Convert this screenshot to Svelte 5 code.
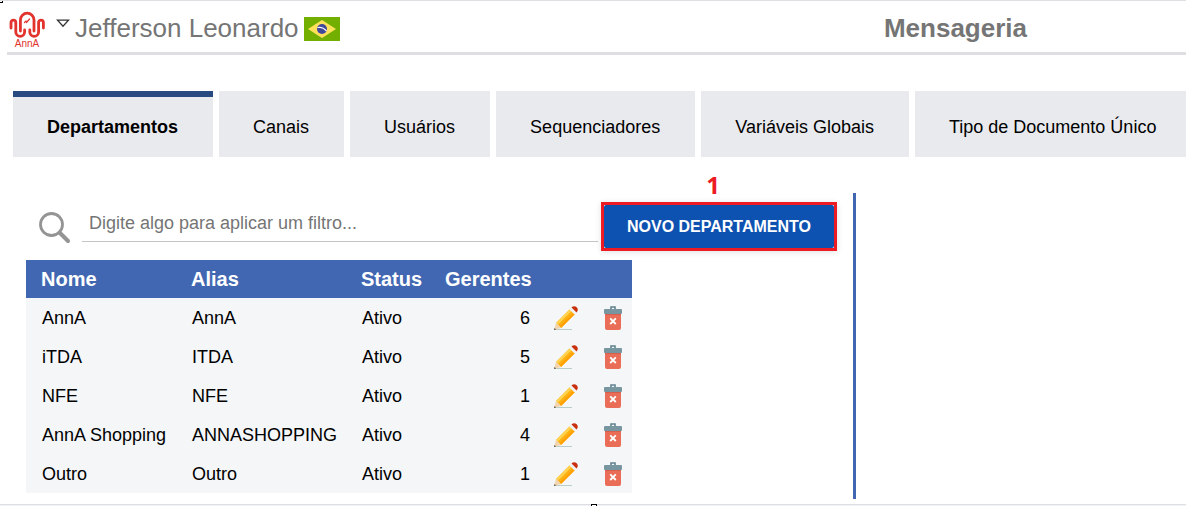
<script>
  const tabs = ['Departamentos', 'Canais', 'Usuários', 'Sequenciadores', 'Variáveis Globais', 'Tipo de Documento Único'];
  let active = $state('Departamentos');
  let filter = $state('');

  const departments = [
    { name: 'AnnA', alias: 'AnnA', status: 'Ativo', managers: 6 },
    { name: 'iTDA', alias: 'ITDA', status: 'Ativo', managers: 5 },
    { name: 'NFE', alias: 'NFE', status: 'Ativo', managers: 1 },
    { name: 'AnnA Shopping', alias: 'ANNASHOPPING', status: 'Ativo', managers: 4 },
    { name: 'Outro', alias: 'Outro', status: 'Ativo', managers: 1 }
  ];
  const rows = $derived(departments.filter((d) => d.name.toLowerCase().includes(filter.toLowerCase())));
</script>

<div class="page">
  <i class="handle corner"></i>
  <header>
    <div class="user">
      <div class="logo">
        <svg width="36" height="28" viewBox="0 0 36 28" fill="none" stroke="#e2342d" stroke-width="2.8" stroke-linecap="round" aria-hidden="true">
          <path d="M2 17V11.500A2.400 2.400 0 0 1 6.800 11.500V21A4.400 4.400 0 0 0 15.600 21V19" />
          <path d="M11.400 20V9A6.800 6.800 0 0 1 25 9V20" />
          <path d="M20.800 19V21A4.400 4.400 0 0 0 29.600 21V11.500A2.400 2.400 0 0 1 34.400 11.500V17" />
          <path d="M15.500 11.500L17 10M17.500 11.500L20.500 8" stroke-width="1.200" />
        </svg>
        <span>AnnA</span>
      </div>
      <button class="menu" aria-label="Menu">
        <svg width="14" height="9" viewBox="0 0 14 9"><path d="M1.500 1.200H12.500L7 7.300Z" fill="#fff" stroke="#333" stroke-width="1.300" /></svg>
      </button>
      <span class="username">Jefferson Leonardo</span>
      <svg class="flag" width="36" height="24" viewBox="0 0 36 24" aria-hidden="true">
        <path fill="#73af00" d="M0 0H36V24H0Z" />
        <path fill="#ffe15a" d="M18 3L32 12L18 21L4 12Z" />
        <circle cx="18" cy="12" r="5" fill="#41479b" />
        <path d="M13.500 10.500C16 10 20 11 22.500 14" fill="none" stroke="#f5f5f5" stroke-width="1.200" />
      </svg>
    </div>
    <h1>Mensageria</h1>
  </header>

  <nav>
    {#each tabs as tab}
      <button class:active={tab === active} onclick={() => (active = tab)}>{tab}</button>
    {/each}
  </nav>

  <main>
    <section>
      <div class="tools">
        <label for="filter" aria-label="Filtro">
          <svg width="32" height="32" viewBox="0 0 32 32" fill="none" stroke="#949494"><circle cx="12.500" cy="12.500" r="11" stroke-width="2.800" /><path d="M20.500 20.500L29 29" stroke-width="4" stroke-linecap="round" /></svg>
        </label>
        <input id="filter" bind:value={filter} placeholder="Digite algo para aplicar um filtro..." />
        <div class="marked">
          <b class="step">1</b>
          <button>NOVO DEPARTAMENTO</button>
        </div>
      </div>

      <table>
        <colgroup><col class="c-name" /><col class="c-alias" /><col class="c-status" /><col class="c-managers" /><col class="c-edit" /><col class="c-remove" /></colgroup>
        <thead>
          <tr><th>Nome</th><th>Alias</th><th>Status</th><th>Gerentes</th><th></th><th></th></tr>
        </thead>
        <tbody>
          {#each rows as row}
            <tr>
              <td>{row.name}</td>
              <td>{row.alias}</td>
              <td>{row.status}</td>
              <td class="number">{row.managers}</td>
              <td class="action">
                <button aria-label="Editar">
                  <svg width="24" height="24" viewBox="0 0 24 24">
                    <path d="M1 23.500H18" stroke="#b9cdca" />
                    <path fill="#ffb013" d="M2 17L16 3L21 8L7 22Z" />
                    <path fill="#ffd34f" d="M2 17L16 3L17.800 4.800L3.800 18.800Z" />
                    <path fill="#ffa000" d="M5.600 20.600L19.600 6.600L21 8L7 22Z" />
                    <path fill="#f2d5ae" d="M2 17L7 22L0 24Z" />
                    <path fill="#45413c" d="M.6 22L2 23.400L0 24Z" />
                    <path fill="#f0f2f3" d="M15.500 3.500L17.500 1.500L22.500 6.500L20.500 8.500Z" />
                    <path fill="#c9300c" d="M17.500 1.500Q20-1 22.700 1.300Q25 4 22.500 6.500Z" />
                  </svg>
                </button>
              </td>
              <td class="action">
                <button aria-label="Excluir">
                  <svg width="18" height="24" viewBox="0 0 18 24">
                    <path fill="#ea6e57" d="M1 7H17V22Q17 24 15 24H3Q1 24 1 22Z" />
                    <path fill="#d75f4d" d="M1 7H17V9H1Z" />
                    <path d="M7 4V1H11V4" fill="none" stroke="#60838f" stroke-width="1.600" />
                    <rect y="3" width="18" height="5" rx="1" fill="#78969f" />
                    <path d="M6.200 12.300L11.800 18M11.800 12.300L6.200 18" stroke="#fff" stroke-width="1.800" />
                  </svg>
                </button>
              </td>
            </tr>
          {/each}
        </tbody>
      </table>
    </section>
    <aside></aside>
  </main>
  <i class="handle bottom"></i>
</div>

<style>
  :global(body) { margin: 0; background: #fff; }
  .page {
    position: relative;
    overflow: hidden;
    border-top: 1px solid #dedee3;
    font-family: "Liberation Sans", Arial, sans-serif;
    font-size: 18px;
    color: #000;
  }
  .page::after { content: ""; display: block; height: 1px; margin-top: 5px; background: #f0f2f6; border-top: 1px solid #dedee5; }
  button { font: inherit; color: inherit; border: 0; padding: 0; margin: 0; background: none; cursor: pointer; }
  svg { display: block; }
  header {
    display: flex;
    justify-content: space-between;
    align-items: center;
    height: 51px;
    margin-left: 7px;
    padding-right: 159px;
    border-bottom: 3px solid #dedee3;
    color: #757575;
    font-size: 26px;
  }
  h1 { margin: 0; font-size: 26px; line-height: 32px; padding-top: 2px; }
  .user { display: flex; align-items: center; }
  .logo { width: 40px; display: flex; flex-direction: column; align-items: center; color: #e2342d; font-size: 10px; line-height: 10px; padding-top: 6px; }
  .menu { margin: 0 5px 6px 9px; }
  .username { line-height: 32px; padding-top: 2px; }
  .flag { margin: 5px 0 0 5px; }
  nav { display: flex; gap: 6px; margin: 36px 0 0 13px; }
  nav button { flex: none; height: 66px; padding: 6px 35px 0 34px; background: #e9eaee; border-top: 0 solid #284a80; }
  nav button.active { border-top-width: 6px; padding-top: 0; font-weight: bold; }
  main { display: flex; margin: 36px 0 0 26px; min-height: 306px; }
  section { width: 827px; }
  aside { flex: 1; border-left: 3px solid #4267b2; }
  .tools { display: flex; align-items: flex-start; padding: 9px 16px 9px 13px; }
  .tools label { margin-top: 10px; }
  input {
    flex: 1;
    min-width: 0;
    box-sizing: border-box;
    height: 40px;
    margin: 0 3px 0 11px;
    padding: 3px 7px 0;
    border: 0;
    border-bottom: 1px solid #c4c4c4;
    outline: 0;
    font: inherit;
    background: none;
  }
  input::placeholder { color: #757575; opacity: 1; }
  .marked { position: relative; border: 3px solid #ed1c24; box-shadow: 0 1px 6px #0000001f; }
  .marked button { display: block; height: 43px; padding: 0 23px; border-radius: 2px; background: #0d52b1; color: #fff; font-size: 16px; font-weight: bold; }
  .step { position: absolute; left: 0; right: 0; top: -34px; padding-right: 12px; text-align: center; font: bold 24px/28px "Open Sans", sans-serif; color: #ed1c24; }
  table { width: 606px; table-layout: fixed; border-collapse: collapse; background: #f4f6f8; }
  .c-name { width: 150px; }
  .c-alias { width: 170px; }
  .c-status { width: 84px; }
  .c-managers { width: 108px; }
  .c-edit { width: 56px; }
  .c-remove { width: 38px; }
  th { height: 38px; padding: 0 0 0 15px; text-align: left; font-size: 20px; color: #fff; background: #4267b2; }
  td { height: 37px; padding: 2px 0 0 16px; }
  .number { padding: 2px 8px 0 0; text-align: right; }
  .action { height: 39px; padding: 0; }
  .action button { display: block; margin: 0 auto; }
  .handle { position: absolute; box-sizing: border-box; border: 1px solid #000; background: #fff; }
  .corner { left: -3px; top: -4px; width: 6px; height: 6px; }
  .bottom { left: 591px; bottom: -4px; width: 6px; height: 6px; }
</style>
